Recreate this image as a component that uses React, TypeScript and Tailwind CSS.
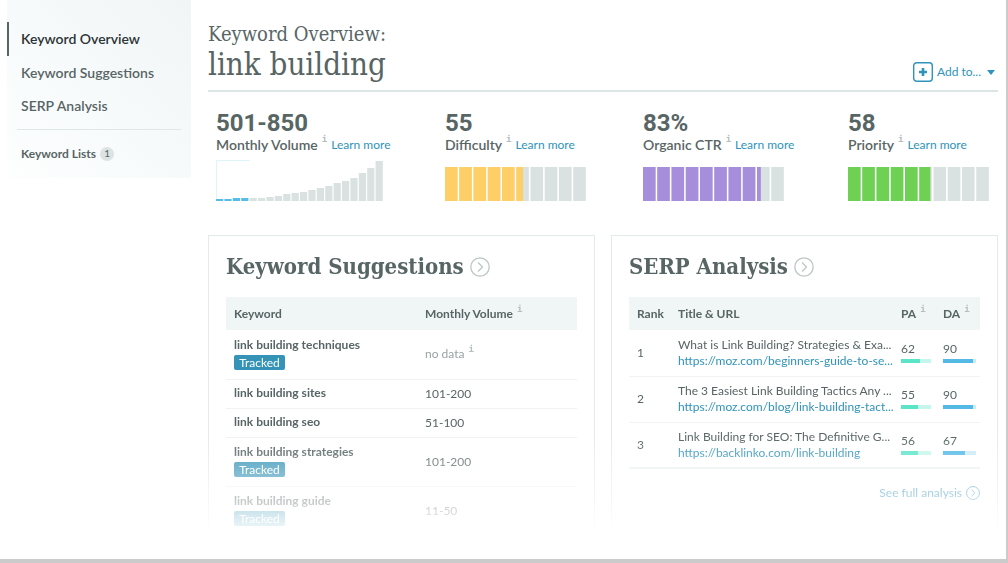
import type { ReactNode } from "react";

const slab = "font-['Roboto_Slab','DejaVu_Serif_Condensed','DejaVu_Serif',serif]";

function Info() {
  return (
    <span className="relative -top-1.5 ml-1 font-['DejaVu_Sans_Mono',monospace] text-[9px] leading-none font-bold text-[#b4bebd]">
      i
    </span>
  );
}

function CircleArrow({ className }: { className: string }) {
  return (
    <svg viewBox="0 0 20 20" fill="none" stroke="currentColor" className={className} aria-hidden="true">
      <circle cx="10" cy="10" r="9.2" strokeWidth="1.3" />
      <path d="M8 5.5 12.5 10 8 14.5" strokeWidth="1.3" />
    </svg>
  );
}

const volumes = [2, 2, 3, 3, 3, 3, 4, 5, 7, 8, 9, 11, 13, 15, 18, 20, 23, 28, 33, 40];

function VolumeChart() {
  return (
    <svg width="167" height="41" viewBox="0 0 167 41" aria-hidden="true">
      <path d="M.5 40V.5H34" fill="none" stroke="#e0f5f9" />
      {volumes.map((h, i) => (
        <rect key={i} x={i * 8.4} y={41 - h} width="7.2" height={h} fill={i < 4 ? "#56bde8" : "#dae2e1"} />
      ))}
    </svg>
  );
}

function Meter({ value, color }: { value: number; color: string }) {
  const end = (value / 100) * 142;
  return (
    <svg width="142" height="34" viewBox="0 0 142 34" aria-hidden="true">
      {Array.from({ length: 10 }, (_, i) => {
        const x = i * 14.25;
        const filled = Math.max(0, Math.min(12.6, end - x));
        return (
          <g key={i}>
            <rect x={x} width="12.6" height="34" fill="#dae2e1" />
            <rect x={x} width={filled} height="34" fill={color} />
          </g>
        );
      })}
    </svg>
  );
}

function Stat({ value, label, children }: { value: string; label: string; children: ReactNode }) {
  return (
    <div className="min-w-0">
      <div className="font-[Roboto,sans-serif] text-2xl leading-6 font-bold">{value}</div>
      <div className="flex h-5 items-center text-sm font-semibold whitespace-nowrap">
        {label}
        <Info />
        <a href="#learn" className="ml-1 text-xs font-normal text-[#2f93bb]">
          Learn more
        </a>
      </div>
      <div className="mt-1 flex h-[42px] items-end">{children}</div>
    </div>
  );
}

function Card({ title, children }: { title: string; children: ReactNode }) {
  return (
    <section className="min-w-0 flex-1 border border-[#e3eaea] px-[17px] pt-[15px]">
      <h2 className="flex h-8 items-center gap-1.5 text-[22px] font-bold whitespace-nowrap">
        <span className={slab}>{title}</span>
        <a href="#more" aria-label={"Open " + title} className="text-[#bcc7c6]">
          <CircleArrow className="size-5" />
        </a>
      </h2>
      {children}
    </section>
  );
}

const keywords = [
  { name: "link building techniques", tracked: true, volume: "" },
  { name: "link building sites", tracked: false, volume: "101-200" },
  { name: "link building seo", tracked: false, volume: "51-100" },
  { name: "link building strategies", tracked: true, volume: "101-200" },
  { name: "link building guide", tracked: true, volume: "11-50" },
];

const results = [
  { title: "What is Link Building? Strategies & Exa...", url: "https://moz.com/beginners-guide-to-se...", pa: 62, da: 90 },
  { title: "The 3 Easiest Link Building Tactics Any ...", url: "https://moz.com/blog/link-building-tact...", pa: 55, da: 90 },
  { title: "Link Building for SEO: The Definitive G...", url: "https://backlinko.com/link-building", pa: 56, da: 67 },
];

function Score({ value, track, fill }: { value: number; track: string; fill: string }) {
  return (
    <>
      <div className="leading-4">{value}</div>
      <div className={"mt-0.5 h-1 " + track}>
        <div className={"h-1 " + fill} style={{ width: value + "%" }} />
      </div>
    </>
  );
}

export default function App() {
  return (
    <div className="flex min-h-screen items-start border-r-2 border-b-4 border-[#cbcbcb] bg-white pr-2 pl-[7px] font-[Lato,sans-serif] text-xs text-[#586565]">
      <nav className="w-[184px] shrink-0 bg-linear-to-bl from-[#f1f5f6] via-[#f7fafa] to-[#fdffff] pt-[22px] pb-3 text-sm font-semibold">
        <a href="#overview" className="flex h-[34px] items-center border-l-2 border-[#586565] pl-3 text-[#2c3436]">
          Keyword Overview
        </a>
        <a href="#suggestions" className="flex h-[33px] items-center pl-3.5">
          Keyword Suggestions
        </a>
        <a href="#serp" className="flex h-[34px] items-center pl-3.5">
          SERP Analysis
        </a>
        <hr className="mx-2.5 mt-1.5 border-[#dfe7e7]" />
        <a href="#lists" className="mt-3 flex h-6 items-center gap-1 pl-3.5 text-xs font-bold">
          Keyword Lists
          <span className="flex size-3.5 items-center justify-center rounded-full bg-[#dde3e2] text-[10px] font-normal">1</span>
        </a>
      </nav>

      <main className="ml-[17px] min-w-0 flex-1">
        <header className="flex items-end justify-between border-b-2 border-[#dde5e7] pt-5">
          <h1 className={slab + " font-light"}>
            <span className="block text-xl leading-7">Keyword Overview:</span>
            <span className="block text-[31px] leading-8">link building</span>
            <span className="block h-2.5" />
          </h1>
          <button type="button" className="mb-2 flex items-center text-[#2f93bb]">
            <svg width="20" height="20" viewBox="0 0 20 20" aria-hidden="true">
              <rect x=".7" y=".7" width="18.6" height="18.6" rx="3" fill="none" stroke="currentColor" strokeWidth="1.4" />
              <path d="M10 6v8M6 10h8" stroke="currentColor" strokeWidth="2.6" />
            </svg>
            <span className="ml-1">Add to...</span>
            <svg width="8" height="5" viewBox="0 0 8 5" className="mr-[3px] ml-1.5" aria-hidden="true">
              <path d="M0 0h8L4 5z" fill="currentColor" />
            </svg>
          </button>
        </header>

        <div className="mt-[19px] grid grid-cols-[229fr_198fr_205fr_142fr] px-2">
          <Stat value="501-850" label="Monthly Volume">
            <VolumeChart />
          </Stat>
          <Stat value="55" label="Difficulty">
            <Meter value={55} color="#ffcf67" />
          </Stat>
          <Stat value="83%" label="Organic CTR">
            <Meter value={83} color="#a78edd" />
          </Stat>
          <Stat value="58" label="Priority">
            <Meter value={58} color="#6ed154" />
          </Stat>
        </div>

        <div className="mt-[34px] flex gap-4 [mask-image:linear-gradient(to_bottom,black_66%,transparent)]">
          <Card title="Keyword Suggestions">
            <table className="mt-3.5 w-full table-fixed text-left">
              <thead>
                <tr className="h-[33px] bg-[#f0f5f6]">
                  <th className="w-[191px] pl-2">Keyword</th>
                  <th className="pl-2">
                    Monthly Volume
                    <Info />
                  </th>
                </tr>
              </thead>
              <tbody>
                {keywords.map((k) => (
                  <tr key={k.name} className={"border-b border-[#eff3f3] " + (k.tracked ? "h-[49px]" : "h-[29px]")}>
                    <td className="pb-0.5 pl-2 leading-4 font-bold">
                      {k.name}
                      {k.tracked && (
                        <span className="mt-0.5 block h-[15px] w-[51px] rounded-[2px] bg-[#3593b7] text-center leading-[15px] font-normal text-white">
                          Tracked
                        </span>
                      )}
                    </td>
                    <td className="pl-2">
                      {k.volume || (
                        <span className="text-[#98a3a3]">
                          no data
                          <Info />
                        </span>
                      )}
                    </td>
                  </tr>
                ))}
              </tbody>
            </table>
          </Card>

          <Card title="SERP Analysis">
            <table className="mt-3.5 w-full table-fixed border-b-2 border-[#eaf0f0] text-left">
              <thead>
                <tr className="h-[33px] bg-[#f0f5f6]">
                  <th className="w-[49px] pl-2">Rank</th>
                  <th>Title &amp; URL</th>
                  <th className="w-[42px]">
                    PA
                    <Info />
                  </th>
                  <th className="w-[37px]">
                    DA
                    <Info />
                  </th>
                </tr>
              </thead>
              <tbody>
                {results.map((r, i) => (
                  <tr key={r.url} className="h-[46px] border-b border-[#eff3f3]">
                    <td className="pl-2">{i + 1}</td>
                    <td className="leading-4 whitespace-nowrap">
                      <div>{r.title}</div>
                      <a href={"#result-" + (i + 1)} className="text-[#2f93bb]">
                        {r.url}
                      </a>
                    </td>
                    <td className="pr-3 pb-0.5">
                      <Score value={r.pa} track="bg-[#c5f6eb]" fill="bg-[#5be5c8]" />
                    </td>
                    <td className="pr-1 pb-0.5">
                      <Score value={r.da} track="bg-[#cbeaf7]" fill="bg-[#54b9e5]" />
                    </td>
                  </tr>
                ))}
              </tbody>
            </table>
            <a href="#full" className="mt-4 flex items-center justify-end gap-1 text-[#2f93bb]">
              See full analysis
              <CircleArrow className="size-3.5" />
            </a>
          </Card>
        </div>
      </main>
    </div>
  );
}
